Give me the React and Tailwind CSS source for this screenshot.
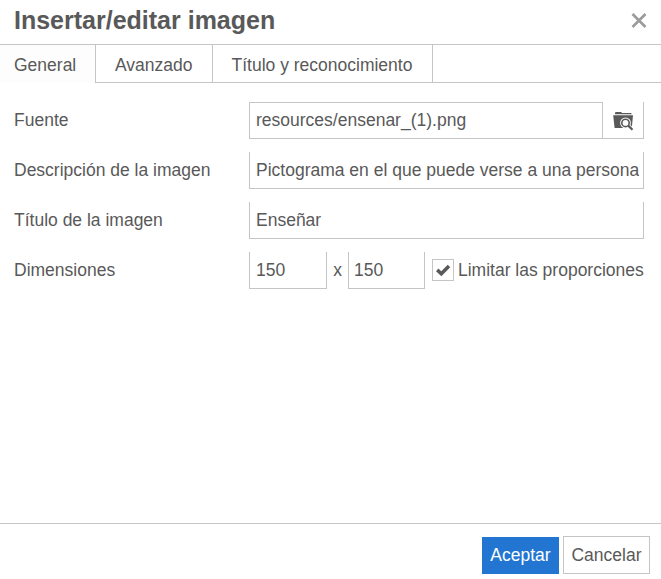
const field = "h-[37px] min-w-0 border-x border-b border-[#c5c5c5] bg-white pr-[4px] text-[17.5px] leading-[20px] text-[#595959] outline-none";

function Row({ label, children }) {
  return (
    <div className="flex h-[37px] items-center">
      <span className="w-[235px] shrink-0 whitespace-nowrap pb-[2px]">{label}</span>
      <div className="flex w-[395px] items-center">{children}</div>
    </div>
  );
}

function BrowseIcon() {
  return (
    <svg className="h-[19px] w-[21px]" viewBox="0 0 21 19" fill="none">
      <path d="M2 2.2V.8L2.8 0h5.4l.8.9H18l.6.7v.6z" fill="#595959" />
      <path d="M.2 3.2h19.8l-1.2 12.8H1.6z" fill="#595959" />
      <path d="M15 13.4l4 4" stroke="white" strokeWidth="4" />
      <circle cx="12.5" cy="10.9" r="5.4" fill="white" />
      <circle cx="12.5" cy="10.9" r="3.7" stroke="#595959" strokeWidth="1.6" />
      <path d="M15.2 13.6l4.3 4.2" stroke="#595959" strokeWidth="2.2" />
    </svg>
  );
}

export default function App() {
  return (
    <div className="flex h-[579px] w-[661px] flex-col overflow-hidden bg-white font-['Liberation_Sans',Arial,sans-serif] text-[17.5px] leading-[20px] text-[#595959]">
      <header className="flex h-[45px] shrink-0 items-center justify-between border-b border-[#c5c5c5] pb-[5px] pl-[14px] pr-[14px]">
        <h1 className="text-[25px] font-bold leading-[30px]">Insertar/editar imagen</h1>
        <button aria-label="Cerrar" className="flex pt-px">
          <svg className="h-[15px] w-[16px]" viewBox="0 0 16 15" fill="none">
            <path d="M1.5 1l13 13M14.5 1l-13 13" stroke="#9b9b9b" strokeWidth="2.6" />
          </svg>
        </button>
      </header>
      <nav className="flex h-[38px] shrink-0 whitespace-nowrap">
        <button className="w-[96px] border-r border-[#c5c5c5] bg-[#fdfdfd] pl-[14px] pt-px text-left">General</button>
        <button className="w-[117px] border-b border-r border-[#c5c5c5] pl-[19px] pt-[2px] text-left">Avanzado</button>
        <button className="w-[220px] border-b border-r border-[#c5c5c5] pl-[18.5px] pt-[2px] text-left">Título y reconocimiento</button>
        <div className="flex-1 border-b border-[#c5c5c5]" />
      </nav>
      <main className="flex flex-1 flex-col gap-[13px] pl-[14px] pt-[19px]">
        <Row label="Fuente">
          <input aria-label="Fuente" className={`${field} w-[354px] border-t pl-[6px]`} defaultValue="resources/ensenar_(1).png" />
          <button aria-label="Examinar" className="flex h-[37px] w-[41px] items-center justify-center border-b border-r border-[#c5c5c5] pt-[3px]">
            <BrowseIcon />
          </button>
        </Row>
        <Row label="Descripción de la imagen">
          <input aria-label="Descripción de la imagen" className={`${field} w-full pl-[6px]`} defaultValue="Pictograma en el que puede verse a una persona" />
        </Row>
        <Row label="Título de la imagen">
          <input aria-label="Título de la imagen" className={`${field} w-full pl-[6px]`} defaultValue="Enseñar" />
        </Row>
        <Row label="Dimensiones">
          <input aria-label="Ancho" className={`${field} w-[78px] pl-[6px]`} defaultValue="150" />
          <span className="w-[21px] pb-[2px] text-center">x</span>
          <input aria-label="Alto" className={`${field} w-[77px] pl-[5px]`} defaultValue="150" />
          <span className="mb-[2px] ml-[7px] flex h-[22px] w-[22px] shrink-0 items-center justify-center border border-[#c5c5c5]">
            <svg className="h-[14px] w-[16px]" viewBox="0 0 16 14" fill="none">
              <path d="M2.2 6.9l4.1 3.8L14 2.9" stroke="#595959" strokeWidth="3.5" />
            </svg>
          </span>
          <span className="ml-[4px] whitespace-nowrap pb-[2px]">Limitar las proporciones</span>
        </Row>
      </main>
      <footer className="flex h-[56px] shrink-0 justify-end gap-[4px] border-t border-[#c5c5c5] pr-[11px] pt-[12px]">
        <button className="mt-px h-[37px] w-[77px] bg-[#2276d2] pb-[2px] text-center text-white">Aceptar</button>
        <button className="h-[38px] w-[87px] border border-[#c5c5c5] text-center">Cancelar</button>
      </footer>
    </div>
  );
}
